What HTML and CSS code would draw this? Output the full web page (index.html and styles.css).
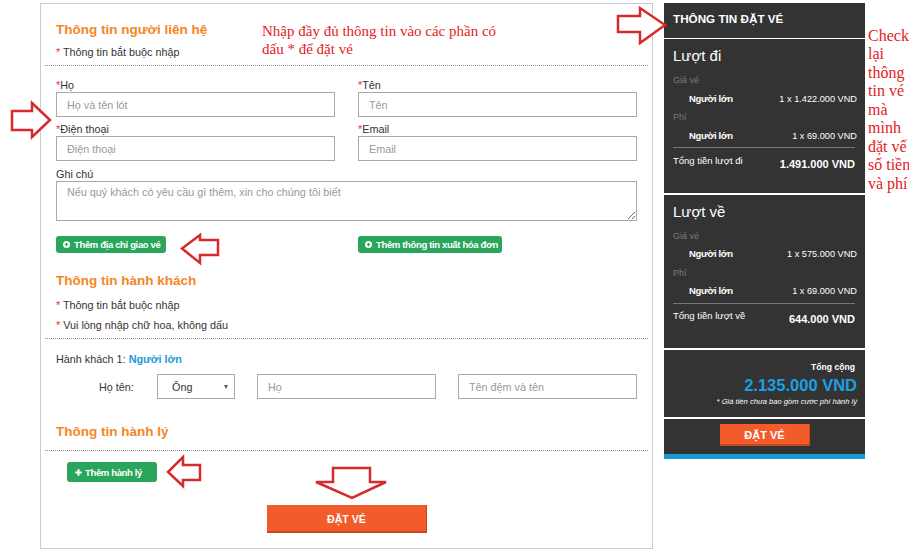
FILE: index.html
```html
<!DOCTYPE html>
<html lang="vi">
<head>
<meta charset="utf-8">
<title>Đặt vé</title>
<link rel="stylesheet" href="styles.css">
</head>
<body>
<div class="page">
  <div class="form-box">
    <div class="contact-head">
      <div class="head-left">
        <h2 class="sec-title">Thông tin người liên hệ</h2>
        <p class="req"><span class="star">*</span> Thông tin bắt buộc nhập</p>
      </div>
      <p class="note-red">Nhập đầy đủ thông tin vào các phần có<br>dấu * để đặt vé</p>
    </div>
    <hr class="dots">
    <div class="fields">
      <div class="field">
        <label class="lbl"><span class="star">*</span>Họ</label>
        <input class="inp" placeholder="Họ và tên lót">
      </div>
      <div class="field">
        <label class="lbl"><span class="star">*</span>Tên</label>
        <input class="inp" placeholder="Tên">
      </div>
      <div class="field">
        <label class="lbl"><span class="star">*</span>Điện thoại</label>
        <input class="inp" placeholder="Điện thoại">
      </div>
      <div class="field">
        <label class="lbl"><span class="star">*</span>Email</label>
        <input class="inp" placeholder="Email">
      </div>
    </div>
    <div class="note-field">
      <label class="lbl">Ghi chú</label>
      <textarea class="txa" placeholder="Nếu quý khách có yêu cầu gì thêm, xin cho chúng tôi biết"></textarea>
    </div>
    <div class="btn-row">
      <button class="gbtn btn-addr"><svg class="ico" viewBox="0 0 8 8" width="7" height="7"><circle cx="4" cy="4" r="4" fill="#fff"/><path d="M4 2v4M2 4h4" stroke="#2aa65c" stroke-width="1.4"/></svg>Thêm địa chỉ giao vé</button>
      <button class="gbtn btn-invoice"><svg class="ico" viewBox="0 0 8 8" width="7" height="7"><circle cx="4" cy="4" r="4" fill="#fff"/><path d="M4 2v4M2 4h4" stroke="#2aa65c" stroke-width="1.4"/></svg>Thêm thông tin xuất hóa đơn</button>
    </div>

    <h2 class="sec-title pax-title">Thông tin hành khách</h2>
    <p class="req req2"><span class="star">*</span> Thông tin bắt buộc nhập</p>
    <p class="req req3"><span class="star">*</span> Vui lòng nhập chữ hoa, không dấu</p>
    <hr class="dots">
    <p class="pax-line">Hành khách 1: <span class="pax-type">Người lớn</span></p>
    <div class="pax-row">
      <span class="pax-lbl">Họ tên:</span>
      <div class="select"><span>Ông</span><span class="caret"></span></div>
      <input class="inp pax-inp" placeholder="Họ">
      <input class="inp pax-inp" placeholder="Tên đệm và tên">
    </div>

    <h2 class="sec-title bag-title">Thông tin hành lý</h2>
    <hr class="dots dots-bag">
    <button class="gbtn btn-bag"><svg class="ico" viewBox="0 0 7 7" width="7" height="7"><path d="M3.5 0.3v6.4M0.3 3.5h6.4" stroke="#fff" stroke-width="2"/></svg>Thêm hành lý</button>
    <button class="submit">ĐẶT VÉ</button>
  </div>

  <aside class="panel">
    <div class="p-head">THÔNG TIN ĐẶT VÉ</div>
    <div class="p-sec">
      <div class="p-title">Lượt đi</div>
      <div class="p-cat">Giá vé</div>
      <div class="p-row"><span class="p-name">Người lớn</span><span>1 x 1.422.000 VND</span></div>
      <div class="p-cat">Phí</div>
      <div class="p-row"><span class="p-name">Người lớn</span><span>1 x 69.000 VND</span></div>
      <div class="p-line"></div>
      <div class="p-total"><span class="p-total-lbl">Tổng tiền lượt đi</span><span class="p-total-val">1.491.000 VND</span></div>
    </div>
    <div class="p-sec">
      <div class="p-title">Lượt về</div>
      <div class="p-cat">Giá vé</div>
      <div class="p-row"><span class="p-name">Người lớn</span><span>1 x 575.000 VND</span></div>
      <div class="p-cat">Phí</div>
      <div class="p-row"><span class="p-name">Người lớn</span><span>1 x 69.000 VND</span></div>
      <div class="p-line"></div>
      <div class="p-total"><span class="p-total-lbl">Tổng tiền lượt về</span><span class="p-total-val">644.000 VND</span></div>
    </div>
    <div class="p-sum">
      <div class="sum-lbl">Tổng cộng</div>
      <div class="sum-val">2.135.000 VND</div>
      <div class="sum-note">* Giá tiền chưa bao gồm cước phí hành lý</div>
    </div>
    <div class="p-act"><button class="p-btn">ĐẶT VÉ</button></div>
    <div class="p-bar"></div>
  </aside>

  <p class="side-note">Check<br>lại<br>thông<br>tin vé<br>mà<br>mình<br>đặt vế<br>số tiền<br>và phí</p>

  <svg class="arrows" width="909" height="552" viewBox="0 0 909 552">
    <g fill="#fff" stroke="#d62a2f" stroke-width="2.5" stroke-linejoin="miter">
      <polygon points="12,111 32,111 32,103 50,120 32,137 32,130 12,130"/>
      <polygon points="618,16 640,16 640,8 665,25 640,43 640,32 618,32"/>
      <polygon points="218,240 200,240 200,235 182,248.5 200,263 200,255 218,255"/>
      <polygon points="200,465 183,465 183,457 168,472 183,486 183,480 200,480"/>
      <polygon points="333,468 370,468 370,482 386,482 352,498 316,482 333,482"/>
    </g>
  </svg>
</div>
</body>
</html>
```
FILE: styles.css
```css
* { box-sizing: border-box; }

body {
  margin: 0;
  background: #fff;
  font-family: "Liberation Sans", Arial, sans-serif;
  font-size: 10.8px;
  color: #333;
}

.page {
  position: relative;
  width: 909px;
  height: 552px;
  overflow: hidden;
  display: flex;
  align-items: flex-start;
  padding: 3px 0 0 40px;
}

/* ---------- main form ---------- */
.form-box {
  flex-shrink: 0;
  width: 613px;
  height: 546px;
  border: 1px solid #ccc;
  padding: 18px 15px 0 15px;
}

.contact-head {
  display: flex;
  align-items: flex-start;
}

.head-left { width: 206px; flex-shrink: 0; }

.sec-title {
  margin: 0;
  font-size: 13.5px;
  line-height: 16px;
  font-weight: bold;
  color: #f5861f;
}

.req {
  margin: 7px 0 0;
  line-height: 14px;
}

.star { color: #e4322b; }

.note-red {
  margin: 0;
  font-family: "Liberation Serif", "Times New Roman", serif;
  font-size: 15px;
  line-height: 18px;
  color: #e3211d;
  white-space: nowrap;
}

.dots {
  margin: 6px -11px 0;
  height: 0;
  border: 0;
  border-top: 1px dotted #8a8a8a;
}

.fields {
  display: grid;
  grid-template-columns: 279px 279px;
  column-gap: 23px;
  row-gap: 6px;
  margin-top: 13px;
}

.lbl {
  display: block;
  line-height: 13px;
}

.inp {
  display: block;
  width: 100%;
  height: 25px;
  margin: 0;
  padding: 0 10px;
  border: 1px solid #a9a9a9;
  border-radius: 0;
  background: #fff;
  font: inherit;
  color: #333;
  outline: none;
}

.inp::placeholder, .txa::placeholder { color: #999; }

.note-field { margin-top: 7px; }

.txa {
  display: block;
  width: 100%;
  height: 40px;
  margin: 0;
  padding: 4px 10px;
  border: 1px solid #a9a9a9;
  border-radius: 0;
  font: inherit;
  color: #333;
  outline: none;
}

.btn-row {
  display: grid;
  grid-template-columns: 279px 279px;
  column-gap: 23px;
  margin-top: 15px;
  align-items: start;
}

.gbtn {
  display: flex;
  align-items: center;
  gap: 4px;
  height: 17px;
  margin: 0;
  padding: 0 0 0 7px;
  border: 0;
  border-radius: 3px;
  background: #2aa65c;
  color: #fff;
  font-family: "Liberation Sans", Arial, sans-serif;
  font-size: 9.5px;
  font-weight: bold;
  letter-spacing: -0.35px;
  white-space: nowrap;
}

.ico { flex-shrink: 0; display: block; }

.btn-addr { width: 110px; }
.btn-invoice { width: 144px; }

.pax-title { margin-top: 20px; }
.req2 { margin-top: 9px; }
.req3 { margin-top: 6px; }

.pax-line {
  margin: 13px 0 0;
  line-height: 14px;
}

.pax-type {
  color: #1a9ad7;
  font-weight: bold;
}

.pax-row {
  display: flex;
  align-items: center;
  height: 25px;
  margin-top: 8px;
  padding-left: 43px;
}

.pax-lbl { width: 58px; flex-shrink: 0; }

.select {
  flex-shrink: 0;
  width: 78px;
  height: 25px;
  display: flex;
  align-items: center;
  justify-content: space-between;
  padding: 0 6px 0 14px;
  border: 1px solid #a9a9a9;
  color: #333;
}

.caret {
  width: 0;
  height: 0;
  border-left: 2.5px solid transparent;
  border-right: 2.5px solid transparent;
  border-top: 4px solid #555;
}

.pax-inp {
  flex-shrink: 0;
  width: 179px;
  margin-left: 22px;
}

.bag-title { margin-top: 25px; }
.dots-bag { margin-top: 10px; }

.btn-bag {
  width: 90px;
  height: 20px;
  margin: 11px 0 0 11px;
  padding-left: 8px;
  gap: 3px;
}

.submit {
  display: block;
  width: 160px;
  height: 28px;
  margin: 23px auto 0;
  padding: 0;
  border: 0;
  background: #f25c2b;
  box-shadow: inset -1px -2px 0 #c8491e;
  color: #fff;
  font-family: "Liberation Sans", Arial, sans-serif;
  font-size: 10.6px;
  font-weight: bold;
}

/* ---------- booking panel ---------- */
.panel {
  flex-shrink: 0;
  width: 201px;
  margin-left: 11px;
  background: #333;
  color: #fff;
}

.p-head {
  height: 36px;
  padding: 9px 9px 0;
  border-bottom: 1px solid #fff;
  font-size: 11.7px;
  line-height: 14px;
  font-weight: bold;
}

.p-sec {
  padding: 8px 8px 22px 9px;
  border-bottom: 2px solid #fff;
}

.p-title {
  font-size: 15px;
  line-height: 18px;
  margin-bottom: 6px;
}

.p-cat {
  color: #7b7b7b;
  font-size: 9px;
  line-height: 18.5px;
}

.p-row {
  display: flex;
  justify-content: space-between;
  font-size: 9.2px;
  line-height: 18.5px;
}

.p-name {
  padding-left: 16px;
  font-size: 9.5px;
  font-weight: bold;
  letter-spacing: -0.35px;
}

.p-line {
  height: 1px;
  margin: 2px 2px 0 0;
  background: #777;
}

.p-total {
  display: flex;
  justify-content: space-between;
  align-items: flex-start;
  margin-top: 5.5px;
  padding-right: 2px;
}

.p-total-lbl {
  font-size: 9.5px;
  line-height: 14px;
}

.p-total-val {
  padding-top: 3px;
  font-size: 11px;
  line-height: 14px;
  font-weight: bold;
}

.p-sum {
  padding: 11px 8px 10px 9px;
  border-bottom: 2px solid #fff;
  text-align: right;
}

.sum-lbl {
  padding-right: 2px;
  font-size: 8.6px;
  line-height: 12px;
  font-weight: bold;
}

.sum-val {
  margin-top: 2px;
  color: #1ba0e2;
  font-size: 16.5px;
  line-height: 20px;
  font-weight: bold;
}

.sum-note {
  margin-top: 1px;
  font-size: 7.6px;
  line-height: 11px;
  font-style: italic;
  white-space: nowrap;
}

.p-act {
  display: flex;
  justify-content: center;
  padding: 4.5px 0 8px;
}

.p-btn {
  width: 90px;
  height: 22px;
  margin: 0;
  padding: 0;
  border: 0;
  background: #f25c2b;
  box-shadow: inset -1px -2px 0 #c8491e;
  color: #fff;
  font-family: "Liberation Sans", Arial, sans-serif;
  font-size: 11px;
  font-weight: bold;
}

.p-bar {
  height: 5px;
  background: #1a9ad6;
}

/* ---------- annotations ---------- */
.side-note {
  flex-shrink: 0;
  margin: 23.5px 0 0 3px;
  font-family: "Liberation Serif", "Times New Roman", serif;
  font-size: 16px;
  line-height: 18.5px;
  color: #e3211d;
  white-space: nowrap;
}

.arrows {
  position: absolute;
  top: 0;
  left: 0;
  pointer-events: none;
}
```
